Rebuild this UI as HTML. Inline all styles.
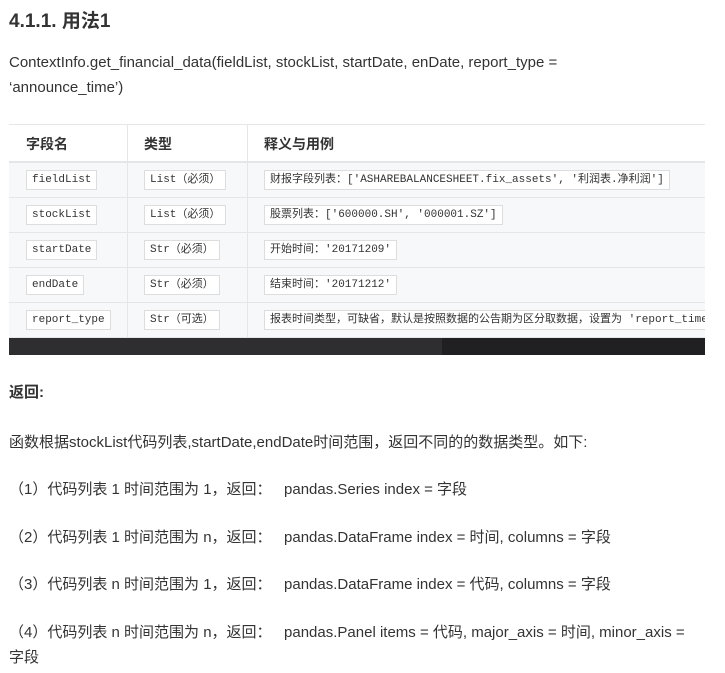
<!DOCTYPE html>
<html><head><meta charset="utf-8"><style>
body{margin:0;background:#fff;color:#333;font-family:"Liberation Sans","Noto Sans CJK SC",sans-serif;width:725px;height:673px;overflow:hidden;position:relative}
.a{position:absolute;left:9px;white-space:nowrap;font-size:15px}
h3{position:absolute;left:9px;top:6px;margin:0;font-size:19px;font-weight:bold}
.tbl{position:absolute;left:9px;top:124px;width:696px;height:231px;overflow:hidden;border-top:1px solid #e4e6e8}
.row{position:absolute;left:0;width:696px;height:35px;background:#f6f8f9;border-bottom:1px solid #e4e6e8;box-sizing:border-box}
.hd{background:#fff;top:0;height:38px;font-weight:bold;font-size:14px;border-bottom:2px solid #e4e6e8}
.c{position:absolute;top:0;height:100%;border-left:1px solid #e4e6e8}
.code{position:absolute;top:7px;background:#fff;border:1px solid #ddd;font-family:"Liberation Mono","Noto Sans CJK SC",monospace;font-size:11px;line-height:18px;padding:0 5px;white-space:nowrap;color:#333}
.sb{position:absolute;left:0;top:213px;width:696px;height:17px;background:#202022}
.th{position:absolute;left:0;top:0;width:433px;height:17px;background:#2e2e31}
</style></head><body>
<h3>4.1.1. 用法1</h3>
<div class="a" style="top:54px">ContextInfo.get_financial_data(fieldList, stockList, startDate, enDate, report_type =</div>
<div class="a" style="top:79px">‘announce_time’)</div>
<div class="tbl">
<div class="row hd"><span style="position:absolute;left:17px;top:9px">字段名</span><div class="c" style="left:118px"></div><span style="position:absolute;left:135px;top:9px">类型</span><div class="c" style="left:238px"></div><span style="position:absolute;left:255px;top:9px">释义与用例</span></div>
<div class="row" style="top:38px"><span class="code" style="left:17px">fieldList</span><div class="c" style="left:118px"></div><span class="code" style="left:135px">List（必须）</span><div class="c" style="left:238px"></div><span class="code" style="left:255px">财报字段列表：['ASHAREBALANCESHEET.fix_assets', '利润表.净利润']</span></div>
<div class="row" style="top:73px"><span class="code" style="left:17px">stockList</span><div class="c" style="left:118px"></div><span class="code" style="left:135px">List（必须）</span><div class="c" style="left:238px"></div><span class="code" style="left:255px">股票列表：['600000.SH', '000001.SZ']</span></div>
<div class="row" style="top:108px"><span class="code" style="left:17px">startDate</span><div class="c" style="left:118px"></div><span class="code" style="left:135px">Str（必须）</span><div class="c" style="left:238px"></div><span class="code" style="left:255px">开始时间：'20171209'</span></div>
<div class="row" style="top:143px"><span class="code" style="left:17px">endDate</span><div class="c" style="left:118px"></div><span class="code" style="left:135px">Str（必须）</span><div class="c" style="left:238px"></div><span class="code" style="left:255px">结束时间：'20171212'</span></div>
<div class="row" style="top:178px"><span class="code" style="left:17px">report_type</span><div class="c" style="left:118px"></div><span class="code" style="left:135px">Str（可选）</span><div class="c" style="left:238px"></div><span class="code" style="left:255px">报表时间类型，可缺省，默认是按照数据的公告期为区分取数据，设置为 'report_time' 为按照报告期取数据</span></div>
<div class="sb"><div class="th"></div></div>
</div>
<div class="a" style="top:381px;font-weight:bold">返回:</div>
<div class="a" style="top:431px">函数根据stockList代码列表,startDate,endDate时间范围，返回不同的的数据类型。如下:</div>
<div class="a" style="top:478px">（1）代码列表 1 时间范围为 1，返回：&nbsp;&nbsp; pandas.Series index = 字段</div>
<div class="a" style="top:526px">（2）代码列表 1 时间范围为 n，返回：&nbsp;&nbsp; pandas.DataFrame index = 时间, columns = 字段</div>
<div class="a" style="top:573px">（3）代码列表 n 时间范围为 1，返回：&nbsp;&nbsp; pandas.DataFrame index = 代码, columns = 字段</div>
<div class="a" style="top:621px">（4）代码列表 n 时间范围为 n，返回：&nbsp;&nbsp; pandas.Panel items = 代码, major_axis = 时间, minor_axis =</div>
<div class="a" style="top:646px">字段</div>
</body></html>
